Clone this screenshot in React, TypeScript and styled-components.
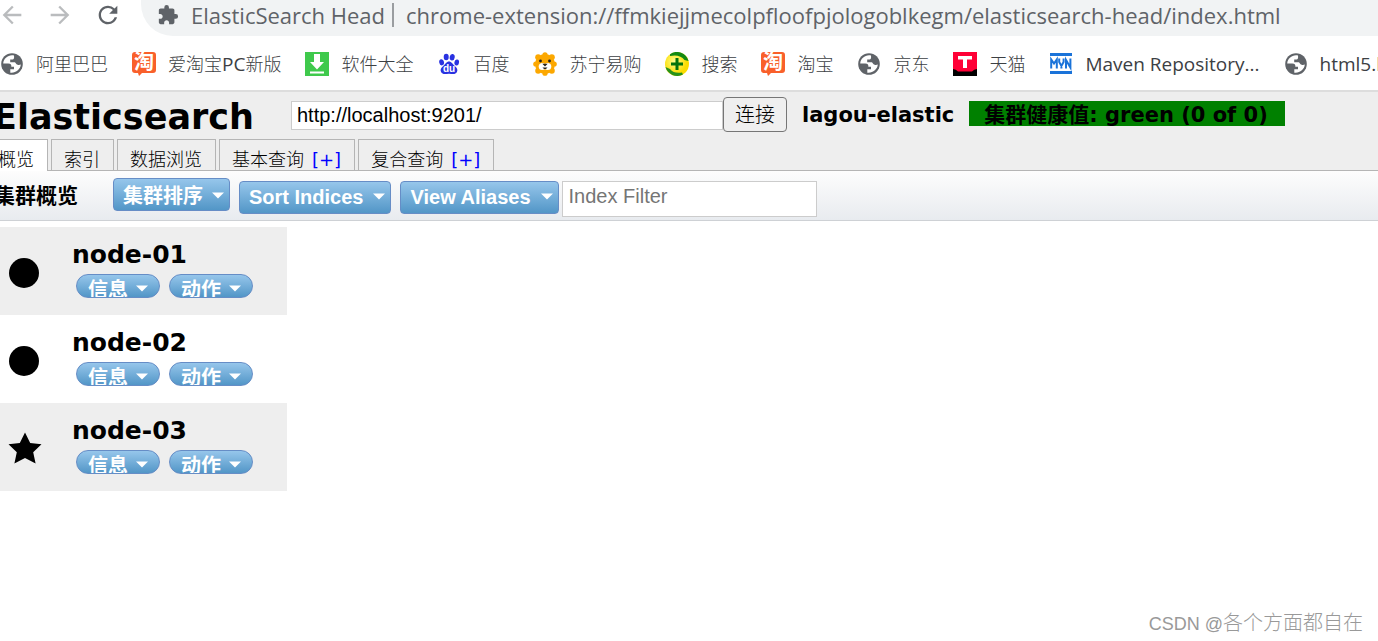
import React from "react";
import styled, { createGlobalStyle, css } from "styled-components";
import { MdArrowBack, MdArrowForward, MdExtension, MdRefresh } from "react-icons/md";

const GlobalStyle = createGlobalStyle`
  *, *::before, *::after { box-sizing: border-box; }
  body {
    margin: 0;
    background: #fff;
    color: #000;
    font-family: "DejaVu Sans", "Noto Sans CJK SC", sans-serif;
    overflow-x: hidden;
  }
`;

const Page = styled.div`
  display: flex;
  flex-direction: column;
  min-height: 100vh;
  overflow: hidden;
`;

const NavBar = styled.div`
  display: flex;
  height: 36px;
`;

const NavButtons = styled.div`
  display: flex;
  flex: none;
  width: 141px;
  height: 30px;
  gap: 20px;
`;

const NavButton = styled.button<{ $dim?: boolean }>`
  display: flex;
  align-items: center;
  justify-content: center;
  width: 28px;
  padding: 0;
  border: 0;
  background: none;
  color: ${(p) => (p.$dim ? "#babcbe" : "#5f6368")};
  &:first-child { margin-left: -2px; }
`;

const AddressBar = styled.div`
  display: flex;
  flex: 1;
  min-width: 0;
  height: 36px;
  padding: 0 0 6px 16px;
  align-items: center;
  background: #f1f3f4;
  border-radius: 0 0 0 32px;
  color: #5f6368;
  font: 22px/30px "Open Sans", "Noto Sans", sans-serif;
  white-space: nowrap;
`;

const AddressTitle = styled.span`
  margin: 0 7px 0 12px;
`;

const AddressUrl = styled.span`
  padding-left: 12px;
  border-left: 2px solid #9a9da0;
  line-height: 24px;
`;

const Bookmarks = styled.nav`
  display: flex;
  align-items: center;
  gap: 24px;
  height: 54px;
  padding-top: 1px;
`;

const Bookmark = styled.a`
  display: flex;
  flex: none;
  align-items: center;
  gap: 12px;
  color: #3c4043;
  font: 18px/26px "Noto Sans", "Noto Sans CJK SC", sans-serif;
  font-weight: 300;
  text-decoration: none;
  white-space: nowrap;
`;

const Latin = styled.span`
  font-size: 19px;
  font-weight: 400;
  font-family: "Open Sans", "Noto Sans", sans-serif;
`;

const Header = styled.header`
  background: #eee;
  border-top: 2px solid #ddd;
  border-bottom: 1px solid #b5b5b5;
`;

const ConnectRow = styled.form`
  display: flex;
  align-items: flex-start;
  height: 47px;
`;

const Title = styled.h1`
  flex: none;
  width: 298px;
  margin: 0 0 0 -7px;
  padding-top: 2px;
  font-size: 35px;
  line-height: 46px;
`;

const UrlInput = styled.input`
  width: 432px;
  height: 29px;
  margin-top: 9px;
  padding: 0 5px;
  border: 1px solid #ccc;
  background: #fff;
  font: 20px/26px "Liberation Sans", sans-serif;
`;

const ConnectButton = styled.button`
  width: 64px;
  height: 35px;
  margin-top: 5px;
  padding: 0;
  border: 1px solid #767676;
  border-radius: 4px;
  background: #efefef;
  font: 20px/30px "Liberation Sans", "Noto Sans CJK SC", sans-serif;
  font-weight: 300;
`;

const ClusterName = styled.span`
  margin: 9px 15px 0;
  font-size: 21px;
  font-weight: bold;
  line-height: 28px;
  white-space: nowrap;
`;

const Health = styled.span`
  height: 25px;
  margin-top: 9px;
  padding: 0 17px 0 15px;
  background: #008000;
  font-size: 21px;
  font-weight: bold;
  line-height: 28px;
  white-space: nowrap;
`;

const Tabs = styled.nav`
  display: flex;
  align-items: flex-end;
  gap: 3px;
  height: 32px;
  margin: 0 0 -1px -15px;
`;

const Tab = styled.a<{ $active?: boolean }>`
  height: 31px;
  margin-bottom: 1px;
  padding: 7px 13px 0 12px;
  border: 1px solid #b5b5b5;
  border-width: 1px 1px 0;
  color: #000;
  font: 18px/26px "DejaVu Sans", "Noto Sans CJK SC", sans-serif;
  font-weight: 300;
  text-decoration: none;
  white-space: nowrap;
  ${(p) => p.$active && css`
    height: 32px;
    margin-bottom: 0;
    background: #fff;
  `}
`;

const Plus = styled.span`
  margin-left: 8px;
  color: #00f;
  font-weight: 400;
`;

const Toolbar = styled.div`
  display: flex;
  align-items: flex-start;
  height: 50px;
  padding-top: 7px;
  border-bottom: 1px solid #ced1d5;
  background: linear-gradient(#fdfdfd, #e8ebef);
`;

const ToolbarTitle = styled.h2`
  flex: none;
  width: 119px;
  margin: 0 0 0 -6px;
  font: bold 21px/33px "Noto Sans CJK SC", sans-serif;
`;

const blue = css`
  display: flex;
  align-items: center;
  border: 1px solid #668dc6;
  background: linear-gradient(#96c6eb, #5296c7);
  color: #fff;
  white-space: nowrap;
`;

const MenuButton = styled.button<{ $low?: boolean }>`
  ${blue}
  gap: ${(p) => (p.$low ? 10 : 9)}px;
  height: 33px;
  margin: ${(p) => (p.$low ? 3 : 0)}px 9px 0 0;
  padding: ${(p) => (p.$low ? "0 5px 2px 9px" : "2px 5px 0 9px")};
  border-radius: 4px;
  font: bold 20px/28px "Liberation Sans", "Noto Sans CJK SC", sans-serif;
`;

const FilterInput = styled.input`
  width: 255px;
  height: 36px;
  margin: 3px 0 0 -6px;
  padding: 0 6px 6px;
  border: 1px solid #ccc;
  background: #fff;
  font: 20px/28px "Liberation Sans", sans-serif;
  &::placeholder { color: #757575; }
`;

const NodeList = styled.ul`
  width: 287px;
  margin: 6px 0 0;
  padding: 0;
  list-style: none;
`;

const NodeItem = styled.li`
  display: flex;
  height: 88px;
  padding-left: 8px;
  &:nth-child(odd) { background: #eee; }
`;

const NodeMark = styled.div`
  display: flex;
  align-items: center;
  width: 64px;
  padding-top: 4px;
`;

const NodeBody = styled.div`
  padding-top: 12px;
`;

const NodeName = styled.h3`
  margin: 0;
  font-size: 25px;
  line-height: 32px;
`;

const NodeActions = styled.div`
  display: flex;
  gap: 9px;
  margin: 3px 0 0 4px;
`;

const Pill = styled.button`
  ${blue}
  gap: 8px;
  height: 24px;
  padding: 5px 11px 0;
  border-radius: 12px;
  font: bold 20px/24px "Noto Sans CJK SC", sans-serif;
  overflow: hidden;
`;

const Watermark = styled.footer`
  margin: auto 15px 2px 0;
  align-self: flex-end;
  color: #999;
  font: 18px/30px "Liberation Sans", sans-serif;
`;

const Author = styled.span`
  font: 20px/30px "Noto Sans CJK SC", sans-serif;
  font-weight: 300;
`;

const Caret = () => (
  <svg width="12" height="7" viewBox="0 0 12 7" aria-hidden="true">
    <path d="M0 0.5H12L6 6.5Z" fill="#fff" />
  </svg>
);

const Globe = () => (
  <svg width="24" height="24" viewBox="0 0 24 24" aria-hidden="true">
    <circle cx="12" cy="12" r="10.8" fill="#5f6368" />
    <path
      d="M14 3.4C8.500 2.200 3.600 6.200 3.200 11.400H8.200C11 11.400 11.700 13.200 11.300 14.800H14V17.300H10.300V20.700C15.600 21.400 20.400 17.600 20.800 12.600C19.800 13 18.700 13.200 17.600 12.800C15.900 12.200 15.800 10.800 14.800 10.200H10.200V7.600H12.600C13.800 7.400 14.400 6 14 3.400Z"
      fill="#fff"
    />
  </svg>
);

const Taobao = () => (
  <svg width="24" height="24" viewBox="0 0 24 24" overflow="visible" aria-hidden="true">
    <path d="M3 0H21Q24 0 24 3V18Q24 21 21 21H10L7 24L6 21H3Q0 21 0 18V3Q0 0 3 0Z" fill="#f9602b" />
    <text x="2" y="17" fontSize="20" fontWeight="700" fontFamily="Noto Sans CJK SC" fill="#fff">淘</text>
  </svg>
);

const Download = () => (
  <svg width="24" height="24" viewBox="0 0 24 24" aria-hidden="true">
    <path d="M0 0H24V24H0Z" fill="#3fc94c" />
    <path d="M9 2H15V10H19L12 17.500L5 10H9ZM5 19.500H19V21.500H5Z" fill="#fff" />
  </svg>
);

const Baidu = () => (
  <svg width="24" height="24" viewBox="0 0 24 24" aria-hidden="true">
    <g fill="#2932e1">
      <ellipse cx="4.600" cy="10.300" rx="2.400" ry="3.100" transform="rotate(-12 4.600 10.300)" />
      <ellipse cx="9.200" cy="5" rx="2.500" ry="3.300" />
      <ellipse cx="15.200" cy="5.200" rx="2.500" ry="3.300" transform="rotate(10 15.200 5.200)" />
      <ellipse cx="19.700" cy="10.500" rx="2.300" ry="3" transform="rotate(10 19.700 10.500)" />
      <path d="M12 9.500C14.500 9.500 15.600 12.300 17.800 14C20.300 16 21 18 19.800 20.300C18.300 23 15 21.700 12 21.700S5.700 23 4.200 20.300C3 18 3.700 16 6.200 14C8.400 12.300 9.500 9.500 12 9.500Z" />
    </g>
    <text x="6" y="20" fontSize="10" fontWeight="700" fontFamily="Liberation Sans" fill="#fff">du</text>
  </svg>
);

const Lion = () => (
  <svg width="24" height="24" viewBox="0 0 24 24" aria-hidden="true">
    <g fill="#fca800">
      <circle cx="12" cy="12" r="10" />
      <circle cx="12" cy="2.800" r="2.600" /><circle cx="12" cy="21.200" r="2.600" />
      <circle cx="2.800" cy="12" r="2.600" /><circle cx="21.200" cy="12" r="2.600" />
      <circle cx="5.200" cy="5.200" r="3" /><circle cx="18.800" cy="5.200" r="3" />
      <circle cx="5.200" cy="18.800" r="3" /><circle cx="18.800" cy="18.800" r="3" />
    </g>
    <circle cx="9.300" cy="14.500" r="3.600" fill="#fff" />
    <circle cx="14.700" cy="14.500" r="3.600" fill="#fff" />
    <circle cx="7.500" cy="9" r="1.400" fill="#26211c" />
    <circle cx="16.500" cy="9" r="1.400" fill="#26211c" />
    <path d="M9.300 11.700H14.700L12 14.600ZM9.500 15.500H14.500Q12 19 9.500 15.500Z" fill="#26211c" />
  </svg>
);

const Search360 = () => (
  <svg width="24" height="24" viewBox="0 0 24 24" aria-hidden="true">
    <defs>
      <radialGradient id="gold" cx="0.4" cy="0.4">
        <stop offset="0" stopColor="#ffff90" />
        <stop offset="1" stopColor="#fbdc00" />
      </radialGradient>
    </defs>
    <circle cx="12" cy="12" r="12" fill="url(#gold)" />
    <path d="M5 2.200A12 12 0 0 1 23.600 9L19.500 8Q15 2 5 4Z" fill="#138a13" />
    <path d="M0.500 15L5 17Q9 22 17 20.500L18 22.400A12 12 0 0 1 0.500 15Z" fill="#27921b" />
    <path d="M12 6V18M6 12H18" stroke="#05730b" strokeWidth="3" />
  </svg>
);

const Tmall = () => (
  <svg width="24" height="24" viewBox="0 0 24 24" aria-hidden="true">
    <path d="M0 0H24V24H0Z" fill="#ff0036" />
    <path d="M0 17Q3 17 5 19.500H19Q21 17 24 17V24H0Z" fill="#000" />
    <path d="M5 4H19V7.500H14V16H10V7.500H5Z" fill="#fff" />
  </svg>
);

const Maven = () => (
  <svg width="24" height="24" viewBox="0 0 24 24" aria-hidden="true">
    <path d="M1 1H23V4H1ZM1 19H23V22H1Z" fill="#1a73d9" />
    <path
      d="M2.200 16.500V7.500L5 11.500L7.800 7.500V16.500M10.200 6.500V10L12.400 14L14.600 10V6.500M12.400 13V16.500M17 16.500V8L21.400 15.500V6.500"
      fill="none"
      stroke="#1a73d9"
      strokeWidth="2"
    />
  </svg>
);

const Disc = () => (
  <svg width="32" height="32" viewBox="0 0 32 32" aria-label="节点">
    <circle cx="16" cy="16" r="15" />
  </svg>
);

const Star = () => (
  <svg width="34" height="34" viewBox="0 0 34 34" aria-label="主节点">
    <path d="M17 0.500L22.200 11L33.500 12.300L25.200 20.300L27.600 31.500L17 26L6.400 31.500L8.800 20.300L0.500 12.300L11.800 11Z" />
  </svg>
);

const bookmarks: [() => React.JSX.Element, React.ReactNode][] = [
  [Globe, "阿里巴巴"],
  [Taobao, <>爱淘宝<Latin>PC</Latin>新版</>],
  [Download, "软件大全"],
  [Baidu, "百度"],
  [Lion, "苏宁易购"],
  [Search360, "搜索"],
  [Taobao, "淘宝"],
  [Globe, "京东"],
  [Tmall, "天猫"],
  [Maven, <Latin>Maven Repository...</Latin>],
  [Globe, <Latin>html5.h</Latin>],
];

const tabs = [
  { label: "概览", active: true },
  { label: "索引" },
  { label: "数据浏览" },
  { label: "基本查询", plus: true },
  { label: "复合查询", plus: true },
];

const nodes = [
  { name: "node-01" },
  { name: "node-02" },
  { name: "node-03", master: true },
];

export default function App() {
  return (
    <Page>
      <GlobalStyle />
      <NavBar>
        <NavButtons>
          <NavButton $dim aria-label="后退"><MdArrowBack size={28} /></NavButton>
          <NavButton $dim aria-label="前进"><MdArrowForward size={28} /></NavButton>
          <NavButton aria-label="刷新"><MdRefresh size={30} /></NavButton>
        </NavButtons>
        <AddressBar>
          <MdExtension size={22} />
          <AddressTitle>ElasticSearch Head</AddressTitle>
          <AddressUrl>chrome-extension://ffmkiejjmecolpfloofpjologoblkegm/elasticsearch-head/index.html</AddressUrl>
        </AddressBar>
      </NavBar>
      <Bookmarks>
        {bookmarks.map(([Icon, label], i) => (
          <Bookmark href="#" key={i}>
            <Icon />
            <span>{label}</span>
          </Bookmark>
        ))}
      </Bookmarks>
      <Header>
        <ConnectRow onSubmit={(e) => e.preventDefault()}>
          <Title>Elasticsearch</Title>
          <UrlInput aria-label="集群地址" defaultValue="http://localhost:9201/" />
          <ConnectButton>连接</ConnectButton>
          <ClusterName>lagou-elastic</ClusterName>
          <Health>集群健康值: green (0 of 0)</Health>
        </ConnectRow>
        <Tabs>
          {tabs.map((t) => (
            <Tab href="#" key={t.label} $active={t.active}>
              {t.label}
              {t.plus && <Plus>[+]</Plus>}
            </Tab>
          ))}
        </Tabs>
      </Header>
      <Toolbar>
        <ToolbarTitle>集群概览</ToolbarTitle>
        <MenuButton>集群排序<Caret /></MenuButton>
        <MenuButton $low>Sort Indices<Caret /></MenuButton>
        <MenuButton $low>View Aliases<Caret /></MenuButton>
        <FilterInput aria-label="Index Filter" placeholder="Index Filter" />
      </Toolbar>
      <NodeList>
        {nodes.map((n) => (
          <NodeItem key={n.name}>
            <NodeMark>{n.master ? <Star /> : <Disc />}</NodeMark>
            <NodeBody>
              <NodeName>{n.name}</NodeName>
              <NodeActions>
                <Pill>信息<Caret /></Pill>
                <Pill>动作<Caret /></Pill>
              </NodeActions>
            </NodeBody>
          </NodeItem>
        ))}
      </NodeList>
      <Watermark>CSDN @<Author>各个方面都自在</Author></Watermark>
    </Page>
  );
}
